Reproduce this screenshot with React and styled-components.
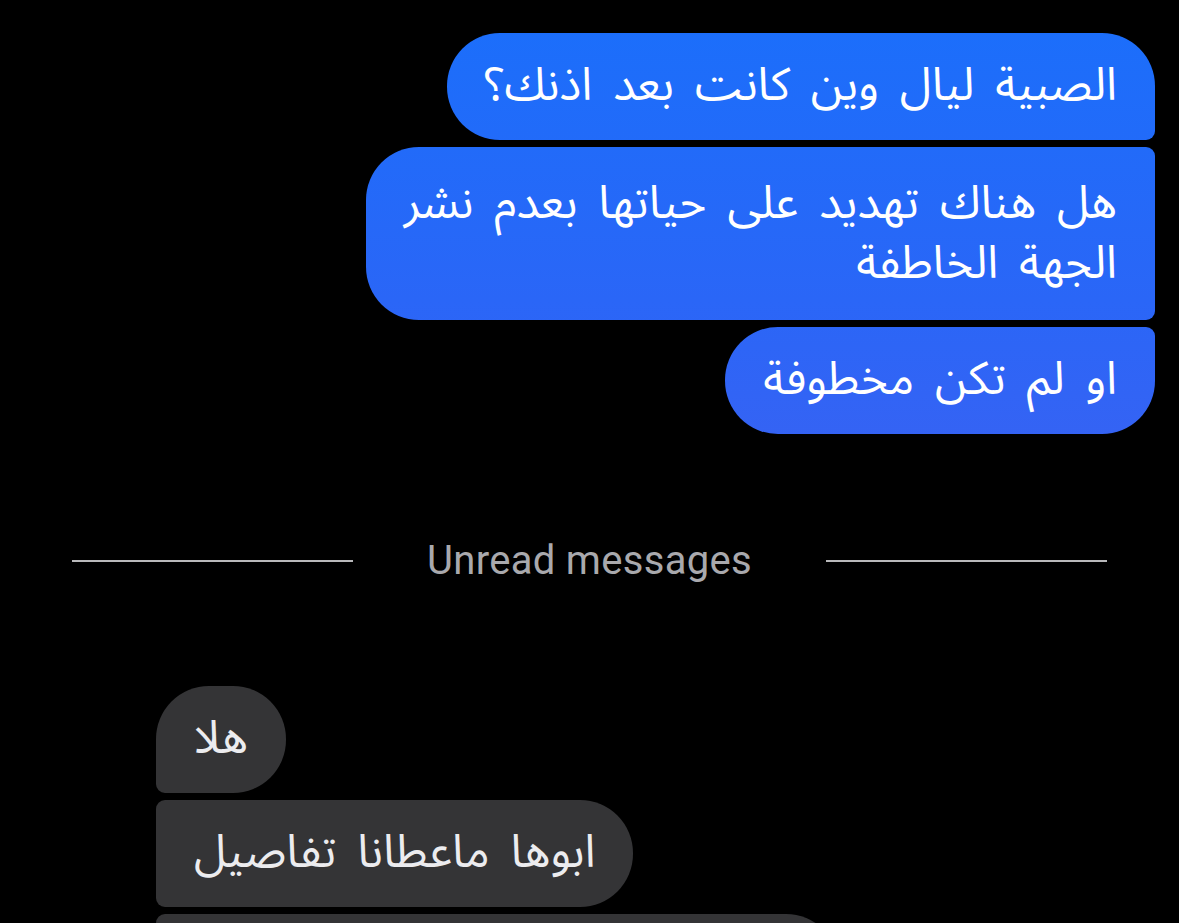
import React from 'react';
import styled, { createGlobalStyle } from 'styled-components';

const GlobalStyle = createGlobalStyle`
  html, body {
    margin: 0;
    padding: 0;
    background: #000;
  }
  body {
    font-family: "Inter", "DejaVu Sans", sans-serif;
    overflow: hidden;
  }
`;

const Screen = styled.div`
  width: 1179px;
  height: 923px;
  background: #000;
  overflow: hidden;
  display: flex;
  flex-direction: column;
  padding: 33px 24px 0 156px;
  box-sizing: border-box;
`;

const Group = styled.div`
  display: flex;
  flex-direction: column;
  align-items: ${(p) => (p.$mine ? 'flex-end' : 'flex-start')};
  gap: 7px;
`;

// radius order: top-left top-right bottom-right bottom-left
const Bubble = styled.div`
  direction: rtl;
  box-sizing: border-box;
  padding: ${(p) => (p.$lines > 1 ? '27px 38px 26px' : '23px 38px 24px')};
  font-family: "Noto Sans Arabic", "DejaVu Sans", sans-serif;
  font-size: 46px;
  line-height: 60px;
  word-spacing: 9px;
  color: ${(p) => (p.$mine ? '#fff' : '#ececef')};
  background: ${(p) =>
    p.$mine
      ? 'linear-gradient(180deg, #1a6ffb 0px, #2a66f7 300px, #3563f4 440px) fixed'
      : '#343436'};
  border-radius: ${(p) => p.$radius};
  white-space: nowrap;
`;

const Divider = styled.div`
  display: flex;
  align-items: center;
  justify-content: center;
  gap: 74px;
  margin: 103px 48px 102px -84px;
`;

const Rule = styled.div`
  flex: 1;
  height: 2px;
  background: #b9b9bb;
`;

const DividerText = styled.span`
  font-family: "Roboto", "Inter", sans-serif;
  font-size: 40px;
  color: #a9a9ad;
  letter-spacing: 0.3px;
`;

const big = '53px';
const small = '9px';

const sent = [
  { lines: ['الصبية ليال وين كانت بعد اذنك؟'], r: `${big} ${big} ${small} ${big}` },
  {
    lines: ['هل هناك تهديد على حياتها بعدم نشر', 'الجهة الخاطفة'],
    r: `${big} ${small} ${small} ${big}`,
  },
  { lines: ['او لم تكن مخطوفة'], r: `${big} ${small} ${big} ${big}` },
];

const received = [
  { lines: ['هلا'], r: `${big} ${big} ${big} ${small}` },
  { lines: ['ابوها ماعطانا تفاصيل'], r: `${small} ${big} ${big} ${small}` },
  { lines: ['ما عندنا معلومات اكثر من هيك'], r: `${small} ${big} ${big} ${big}` },
];

const renderLines = (lines) =>
  lines.map((line, i) => (
    <React.Fragment key={line}>
      {i > 0 && <br />}
      {line}
    </React.Fragment>
  ));

const App = () => {
  return (
    <>
      <GlobalStyle />
      <Screen>
        <Group $mine>
          {sent.map((m) => (
            <Bubble key={m.lines[0]} $mine $radius={m.r} $lines={m.lines.length}>
              {renderLines(m.lines)}
            </Bubble>
          ))}
        </Group>

        <Divider>
          <Rule />
          <DividerText>Unread messages</DividerText>
          <Rule />
        </Divider>

        <Group>
          {received.map((m) => (
            <Bubble key={m.lines[0]} $radius={m.r} $lines={m.lines.length}>
              {renderLines(m.lines)}
            </Bubble>
          ))}
        </Group>
      </Screen>
    </>
  );
};

export default App;
